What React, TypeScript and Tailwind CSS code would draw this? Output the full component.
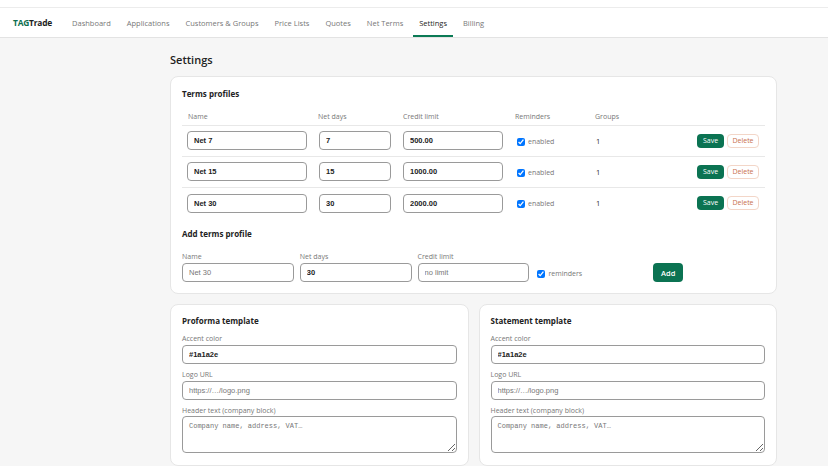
import { useState } from "react";

type TermsProfile = {
  id: number;
  name: string;
  netDays: string;
  creditLimit: string;
  reminders: boolean;
  groups: number;
};

const navItems = [
  "Dashboard",
  "Applications",
  "Customers & Groups",
  "Price Lists",
  "Quotes",
  "Net Terms",
  "Settings",
  "Billing",
];

const initialProfiles: TermsProfile[] = [
  { id: 1, name: "Net 7", netDays: "7", creditLimit: "500.00", reminders: true, groups: 1 },
  { id: 2, name: "Net 15", netDays: "15", creditLimit: "1000.00", reminders: true, groups: 1 },
  { id: 3, name: "Net 30", netDays: "30", creditLimit: "2000.00", reminders: true, groups: 1 },
];

const inputClass =
  "block h-[19px] rounded-[4px] border border-[#9a9a9a] bg-white px-[6px] font-['Liberation_Sans',Arial,sans-serif] text-[7.5px] font-bold text-[#222] outline-none placeholder:font-normal placeholder:text-[#777]";

export default function App() {
  const [profiles, setProfiles] = useState(initialProfiles);

  return (
    <div className="min-h-screen bg-[#f6f6f6] font-['Open_Sans',sans-serif] text-[#222]">
      <div className="h-[8px] border-b border-[#ececec] bg-white" />
      <nav className="flex h-[30px] items-stretch border-b border-[#e3e3e3] bg-white pl-[13px]">
        <div className="mr-[14px] flex items-center pt-[2px] text-[8.4px] font-bold tracking-[-0.2px]">
          <span className="text-[#0b6e4f]">TAG</span>
          <span className="text-[#1d1d1d]">Trade</span>
        </div>
        <div className="flex gap-[4px]">
          {navItems.map((item) => {
            const active = item === "Settings";
            return (
              <a
                key={item}
                href="#"
                className={`flex items-center border-b-2 px-[6px] pt-[2px] text-[7.5px] leading-[10px] ${
                  active
                    ? "border-[#0b7a55] text-[#1d1d1d]"
                    : "border-transparent text-[#777]"
                }`}
              >
                {item}
              </a>
            );
          })}
        </div>
      </nav>

      <main className="ml-[170px] w-[607px] pt-[13px]">
        <h1 className="text-[11px] font-semibold leading-[18px] text-[#222]">Settings</h1>

        <section className="mt-[7px] rounded-[8px] border border-[#e6e6e6] bg-white px-[11px] pb-[11px] pt-[10px]">
          <h2 className="text-[8px] font-bold leading-[13px]">Terms profiles</h2>

          <div className="mt-[7px] grid h-[19px] grid-cols-[131px_85px_112px_80px_1fr_auto] items-center border-b border-[#e8e8e8] pt-[2px] text-[7px] leading-[10px] text-[#777]">
            <span className="pl-[6px]">Name</span>
            <span className="pl-[5px]">Net days</span>
            <span className="pl-[5px]">Credit limit</span>
            <span className="pl-[5px]">Reminders</span>
            <span className="pl-[5px]">Groups</span>
            <span />
          </div>

          {profiles.map((p, i) => (
            <div
              key={p.id}
              className={`grid h-[31px] grid-cols-[131px_85px_112px_80px_1fr_auto] items-center pb-[1px] ${
                i < profiles.length - 1 ? "border-b border-[#e8e8e8]" : ""
              }`}
            >
              <div className="flex pl-[5px]">
                <input
                  value={p.name}
                  onChange={(e) =>
                    setProfiles((all) =>
                      all.map((x) => (x.id === p.id ? { ...x, name: e.target.value } : x)),
                    )
                  }
                  className={`${inputClass} w-[120px]`}
                />
              </div>
              <div className="flex pl-[6px]">
                <input value={p.netDays} readOnly className={`${inputClass} w-[72px]`} />
              </div>
              <div className="flex pl-[5px]">
                <input value={p.creditLimit} readOnly className={`${inputClass} w-[100px]`} />
              </div>
              <label className="flex items-center gap-[3px] pl-[7px] pt-[2px] text-[7px] leading-[10px] text-[#777]">
                <input type="checkbox" defaultChecked={p.reminders} className="m-0 h-[8px] w-[8px]" />
                enabled
              </label>
              <span className="pl-[6px] text-[7.5px] leading-[10px] text-[#333]">{p.groups}</span>
              <div className="flex items-center gap-[3px] pr-[6px]">
                <button className="h-[14px] w-[27px] rounded-[4px] bg-[#0b7352] text-[7px] leading-[10px] text-white">
                  Save
                </button>
                <button className="h-[14px] w-[32px] rounded-[4px] border border-[#f3d6c8] bg-white text-[7px] leading-[10px] text-[#c8704d]">
                  Delete
                </button>
              </div>
            </div>
          ))}

          <h2 className="mt-[8px] text-[8px] font-bold leading-[13px]">Add terms profile</h2>

          <div className="mt-[12px] grid grid-cols-5 items-end gap-x-[6px]">
            <label className="flex flex-col gap-[1px] text-[7px] leading-[10px] text-[#777]">
              Name
              <input placeholder="Net 30" className={`${inputClass} w-full`} />
            </label>
            <label className="flex flex-col gap-[1px] text-[7px] leading-[10px] text-[#777]">
              Net days
              <input defaultValue="30" className={`${inputClass} w-full`} />
            </label>
            <label className="flex flex-col gap-[1px] text-[7px] leading-[10px] text-[#777]">
              Credit limit
              <input placeholder="no limit" className={`${inputClass} w-full`} />
            </label>
            <label className="flex items-center gap-[3px] pb-[3px] pl-[2px] text-[7px] leading-[10px] text-[#777]">
              <input type="checkbox" defaultChecked className="m-0 h-[8px] w-[8px]" />
              reminders
            </label>
            <div className="flex">
              <button className="h-[19px] w-[30px] rounded-[4px] bg-[#0b7352] text-[7.5px] font-semibold leading-[10px] text-white">
                Add
              </button>
            </div>
          </div>
        </section>

        <div className="mt-[10px] grid grid-cols-2 gap-[10px]">
          <TemplateCard title="Proforma template" />
          <TemplateCard title="Statement template" />
        </div>
      </main>
    </div>
  );
}

function TemplateCard({ title }: { title: string }) {
  return (
    <section className="rounded-[8px] border border-[#e6e6e6] bg-white px-[11px] pb-[12px] pt-[9px]">
      <h2 className="text-[8px] font-bold leading-[13px]">{title}</h2>
      <div className="mt-[7px] text-[7px] leading-[10px] text-[#777]">Accent color</div>
      <input defaultValue="#1a1a2e" className={`${inputClass} mt-[1px] h-[18px] w-full`} />
      <div className="mt-[6px] text-[7px] leading-[10px] text-[#777]">Logo URL</div>
      <input placeholder="https://…/logo.png" className={`${inputClass} mt-[1px] h-[18px] w-full`} />
      <div className="mt-[6px] text-[7px] leading-[10px] text-[#777]">Header text (company block)</div>
      <textarea
        placeholder="Company name, address, VAT…"
        className="mt-0 block h-[37px] w-full rounded-[4px] border border-[#9a9a9a] px-[6px] py-[4px] font-['Liberation_Mono',monospace] text-[7px] outline-none placeholder:text-[#777]"
      />
    </section>
  );
}
